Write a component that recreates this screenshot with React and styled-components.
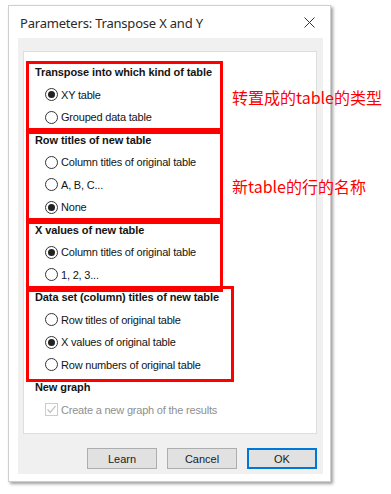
import React from "react";
import styled, { createGlobalStyle } from "styled-components";

const Global = createGlobalStyle`
  html, body { margin: 0; padding: 0; background: #ffffff; }
  body { font-family: "Liberation Sans", Arial, sans-serif; }
  * { box-sizing: border-box; }
`;

const Page = styled.div`
  position: relative;
  width: 391px;
  height: 494px;
  padding: 5px 0 0 8px;
  background: #ffffff;
`;

const Window = styled.div`
  width: 323px;
  height: 477px;
  background: #ffffff;
  border: 1px solid #cfcfcf;
  box-shadow: 2px 2px 3px rgba(0, 0, 0, 0.38);
  display: flex;
  flex-direction: column;
  padding: 0 7px 7px 9px;
`;

const TitleBar = styled.div`
  height: 32px;
  display: flex;
  align-items: center;
  justify-content: space-between;
  padding: 0 8px 0 2px;
`;

const TitleText = styled.span`
  font-family: "Noto Sans", "Open Sans", sans-serif;
  font-size: 13px;
  letter-spacing: -0.2px;
  color: #2a2a2a;
  margin-top: 1px;
`;

const CloseIcon = styled.svg`
  width: 11px;
  height: 11px;
  display: block;
  margin-top: 1px;
`;

const Body = styled.div`
  flex: 1;
  background: #f0f0f0;
  padding: 13px 6px 5px 5px;
  display: flex;
  flex-direction: column;
`;

const Panel = styled.div`
  background: #ffffff;
  border: 1px solid #dedede;
  padding: 11.5px 0 9.5px 0;
  display: flex;
  flex-direction: column;
`;

const Group = styled.div`
  width: ${(p) => p.$width}px;
  margin: -3px 0 -3px 2px;
  border: 3px solid ${(p) => (p.$boxed ? "#ff0000" : "transparent")};
  position: relative;
`;

const Row = styled.div`
  height: 22.5px;
  padding-bottom: 5px;
  display: flex;
  align-items: center;
  padding-left: ${(p) => p.$indent}px;
  font-size: 11px;
  color: #141414;
  white-space: nowrap;
`;

const Heading = styled.span`
  font-weight: bold;
  letter-spacing: -0.1px;
`;

const Label = styled.span`
  letter-spacing: -0.2px;
  color: ${(p) => (p.$disabled ? "#8f8f8f" : "#141414")};
`;

const RadioCircle = styled.span`
  width: 13px;
  height: 13px;
  border-radius: 50%;
  border: 1px solid #333333;
  background: #ffffff;
  display: inline-flex;
  align-items: center;
  justify-content: center;
  margin-right: 3px;
  flex: none;
  &::after {
    content: "";
    width: 7px;
    height: 7px;
    border-radius: 50%;
    background: ${(p) => (p.$checked ? "#222222" : "transparent")};
  }
`;

const CheckBoxBox = styled.span`
  width: 13px;
  height: 13px;
  border: 1px solid #cccccc;
  background: #ffffff;
  display: inline-flex;
  align-items: center;
  justify-content: center;
  margin-right: 3px;
  flex: none;
`;

const ButtonBar = styled.div`
  margin-top: 14px;
  display: flex;
  justify-content: flex-end;
  gap: 10px;
  padding-right: 0px;
`;

const Button = styled.button`
  width: 70px;
  height: 21px;
  margin: 0;
  padding: 0;
  font-family: "Liberation Sans", Arial, sans-serif;
  font-size: 11px;
  color: #1b1b1b;
  background: #e1e1e1;
  border: 1px solid ${(p) => (p.$primary ? "#0078d7" : "#adadad")};
  box-shadow: ${(p) => (p.$primary ? "inset 0 0 0 1px #0078d7" : "none")};
`;

const Note = styled.div`
  position: absolute;
  left: 232px;
  top: ${(p) => p.$top}px;
  font-family: "Noto Sans CJK SC", "Noto Sans", sans-serif;
  font-size: 16px;
  line-height: 22px;
  color: #ff0000;
  white-space: nowrap;
`;

function Radio({ checked, children }) {
  return (
    <Row $indent={16}>
      <RadioCircle $checked={checked} />
      <Label>{children}</Label>
    </Row>
  );
}

function Section({ title, options, selected, width }) {
  return (
    <Group $boxed $width={width}>
      <Row $indent={6}>
        <Heading>{title}</Heading>
      </Row>
      {options.map((o, i) => (
        <Radio key={o} checked={i === selected}>
          {o}
        </Radio>
      ))}
    </Group>
  );
}

const sections = [
  {
    title: "Transpose into which kind of table",
    options: ["XY table", "Grouped data table"],
    selected: 0,
    width: 197,
  },
  {
    title: "Row titles of new table",
    options: ["Column titles of original table", "A, B, C...", "None"],
    selected: 2,
    width: 197,
  },
  {
    title: "X values of new table",
    options: ["Column titles of original table", "1, 2, 3..."],
    selected: 0,
    width: 197,
  },
  {
    title: "Data set (column) titles of new table",
    options: [
      "Row titles of original table",
      "X values of original table",
      "Row numbers of original table",
    ],
    selected: 1,
    width: 208,
  },
];

export default function App() {
  return (
    <>
      <Global />
      <Page>
        <Window>
          <TitleBar>
            <TitleText>Parameters: Transpose X and Y</TitleText>
            <CloseIcon viewBox="0 0 11 11">
              <path d="M0.5 0.5 L10.5 10.5 M10.5 0.5 L0.5 10.5" stroke="#333" strokeWidth="1" fill="none" />
            </CloseIcon>
          </TitleBar>
          <Body>
            <Panel>
              {sections.map((s) => (
                <Section key={s.title} {...s} />
              ))}
              <Group $width={260}>
                <Row $indent={6}>
                  <Heading>New graph</Heading>
                </Row>
                <Row $indent={16}>
                  <CheckBoxBox>
                    <svg width="11" height="11" viewBox="0 0 11 11">
                      <path d="M1.5 5.5 L4.2 8.3 L9.5 2.2" stroke="#bdbdbd" strokeWidth="1.2" fill="none" />
                    </svg>
                  </CheckBoxBox>
                  <Label $disabled>Create a new graph of the results</Label>
                </Row>
              </Group>
            </Panel>
            <ButtonBar>
              <Button>Learn</Button>
              <Button>Cancel</Button>
              <Button $primary>OK</Button>
            </ButtonBar>
          </Body>
        </Window>
        <Note $top={86}>转置成的table的类型</Note>
        <Note $top={175}>新table的行的名称</Note>
      </Page>
    </>
  );
}
